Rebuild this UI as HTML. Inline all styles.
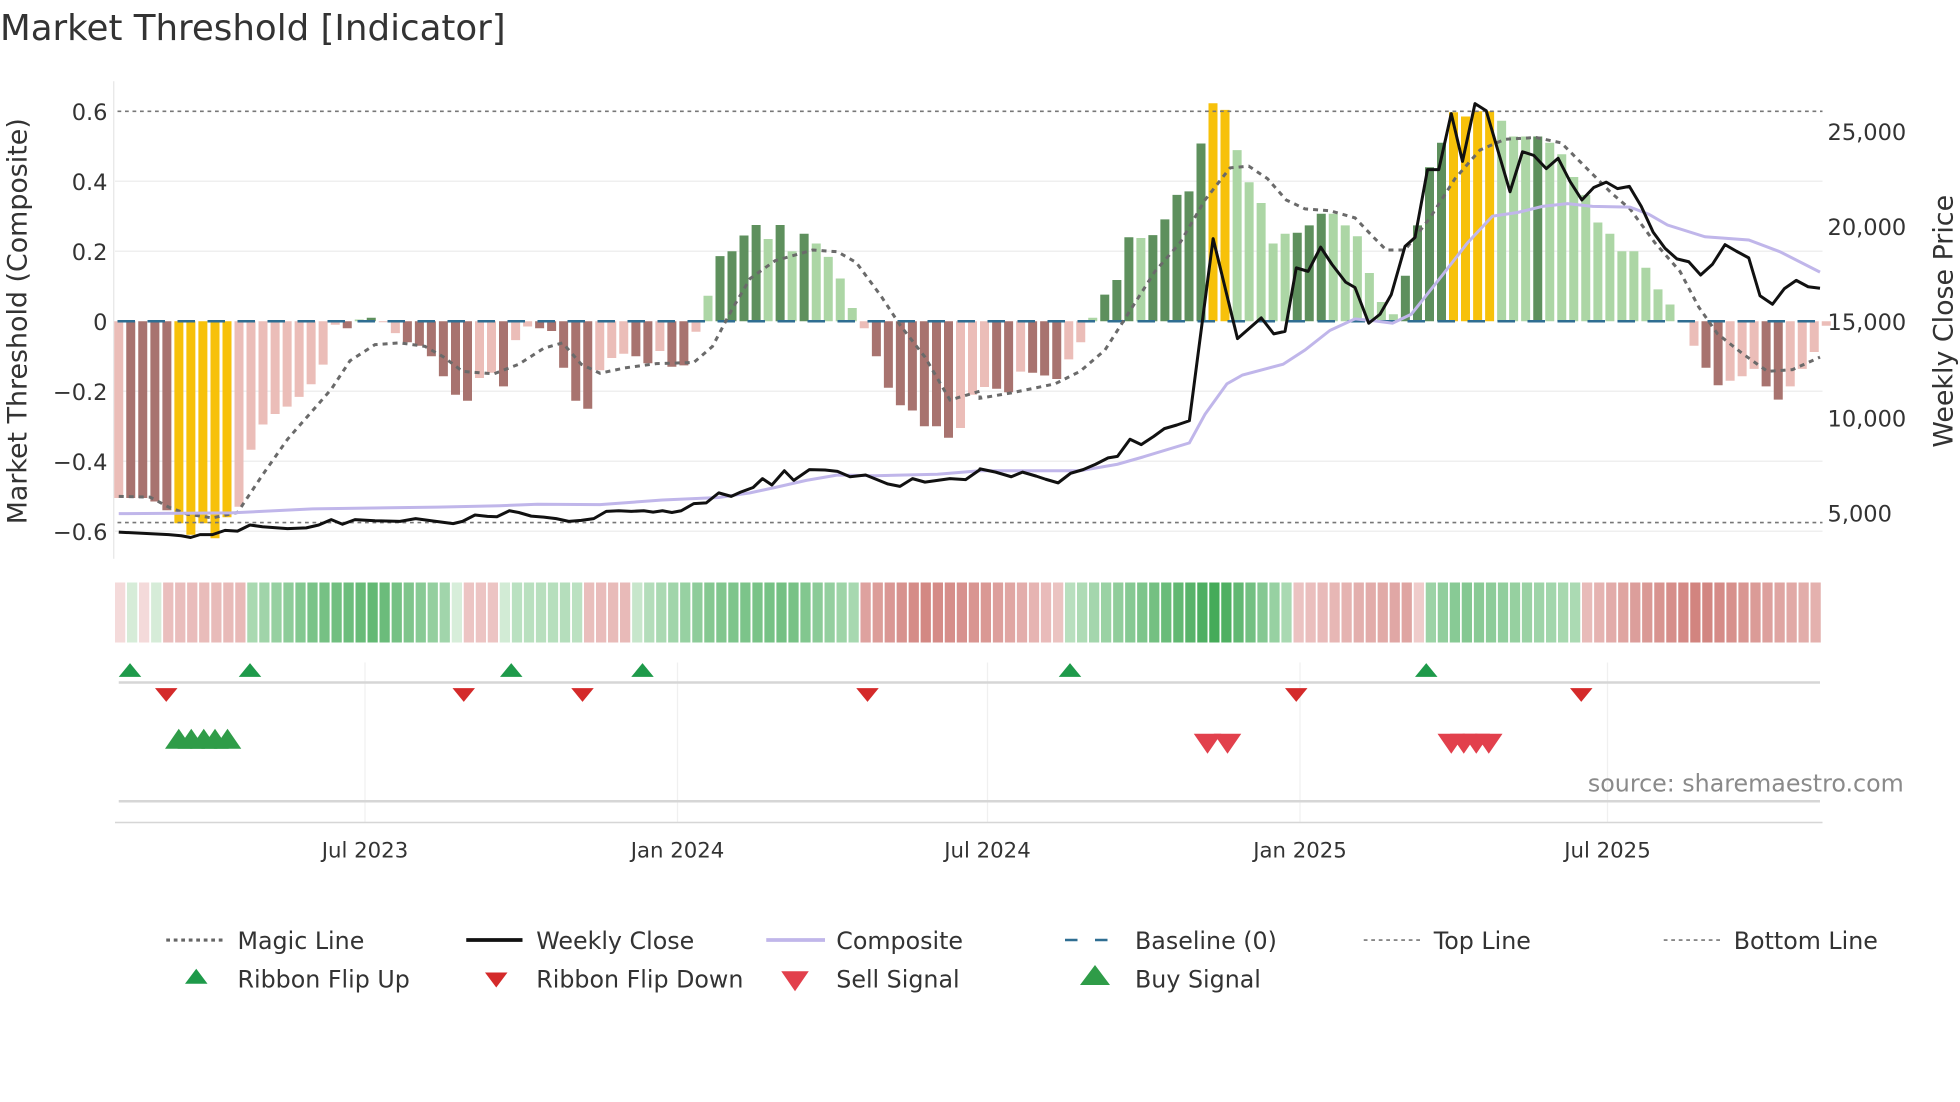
<!DOCTYPE html>
<html><head><meta charset="utf-8">
<style>
html,body{margin:0;padding:0;background:#fff;}
svg{display:block;font-family:"DejaVu Sans","Liberation Sans",sans-serif;}
</style></head>
<body>
<svg id="c" xmlns="http://www.w3.org/2000/svg" width="1960" height="1102" viewBox="0 0 1568 881.6" preserveAspectRatio="none">
<rect width="1568" height="882" fill="#fff"/>
<text x="0" y="32" font-size="28.5" fill="#333">Market Threshold [Indicator]</text>
<line x1="91" y1="65" x2="91" y2="447" stroke="#e6e6e6" stroke-width="1"/>
<g stroke="#efefef" stroke-width="1.2">
<line x1="92" y1="145" x2="1458" y2="145"/><line x1="92" y1="201" x2="1458" y2="201"/>
<line x1="92" y1="313" x2="1458" y2="313"/><line x1="92" y1="369" x2="1458" y2="369"/>
<line x1="92" y1="425" x2="1458" y2="425"/>
</g>
<g font-size="18" fill="#333" text-anchor="end">
<text x="86" y="96">0.6</text><text x="86" y="152">0.4</text><text x="86" y="208">0.2</text>
<text x="86" y="264">0</text><text x="86" y="320">−0.2</text><text x="86" y="376">−0.4</text><text x="86" y="432">−0.6</text>
</g>
<g font-size="18" fill="#333">
<text x="1462" y="112">25,000</text><text x="1462" y="188">20,000</text><text x="1462" y="264">15,000</text>
<text x="1462" y="341">10,000</text><text x="1462" y="417">5,000</text>
</g>
<text transform="translate(21,257) rotate(-90)" font-size="21.5" fill="#333" text-anchor="middle">Market Threshold (Composite)</text>
<text transform="translate(1562,257) rotate(-90)" font-size="21.5" fill="#333" text-anchor="middle">Weekly Close Price</text>
<g id="bars"></g>
<line x1="94" y1="89" x2="1458" y2="89" stroke="#777" stroke-width="1.3" stroke-dasharray="3,3"/>
<line x1="94" y1="418" x2="1458" y2="418" stroke="#777" stroke-width="1.3" stroke-dasharray="3,3"/>
<line x1="94" y1="257" x2="1458" y2="257" stroke="#2f6e92" stroke-width="2" stroke-dasharray="14,10"/>
<g id="lines"></g>
<g id="ribbon"></g>
<g stroke="#f0f0f0" stroke-width="1">
<line x1="292" y1="530" x2="292" y2="658"/><line x1="542" y1="530" x2="542" y2="658"/>
<line x1="790" y1="530" x2="790" y2="658"/><line x1="1040" y1="530" x2="1040" y2="658"/>
<line x1="1286" y1="530" x2="1286" y2="658"/>
</g>
<line x1="95" y1="546" x2="1456" y2="546" stroke="#d6d6d6" stroke-width="2"/>
<line x1="95" y1="641" x2="1456" y2="641" stroke="#d6d6d6" stroke-width="2"/>
<line x1="92" y1="658" x2="1458" y2="658" stroke="#d6d6d6" stroke-width="1.2"/>
<g id="sig"></g>
<text x="1523" y="633" font-size="19" fill="#8a8a8a" text-anchor="end">source: sharemaestro.com</text>
<g font-size="17" fill="#333" text-anchor="middle">
<text x="292" y="686">Jul 2023</text><text x="542" y="686">Jan 2024</text><text x="790" y="686">Jul 2024</text>
<text x="1040" y="686">Jan 2025</text><text x="1286" y="686">Jul 2025</text>
</g>
<g font-size="19" fill="#333">
<line x1="133" y1="752" x2="178" y2="752" stroke="#666" stroke-width="2.5" stroke-dasharray="3,3"/><text x="190" y="759">Magic Line</text>
<line x1="373" y1="752" x2="418" y2="752" stroke="#111" stroke-width="3"/><text x="429" y="759">Weekly Close</text>
<line x1="613" y1="752" x2="660" y2="752" stroke="#c0b6ea" stroke-width="3"/><text x="669" y="759">Composite</text>
<line x1="852" y1="752" x2="897" y2="752" stroke="#2f6e92" stroke-width="2" stroke-dasharray="10,14"/><text x="908" y="759">Baseline (0)</text>
<line x1="1091" y1="752" x2="1136" y2="752" stroke="#777" stroke-width="1.3" stroke-dasharray="3,3"/><text x="1147" y="759">Top Line</text>
<line x1="1331" y1="752" x2="1376" y2="752" stroke="#777" stroke-width="1.3" stroke-dasharray="3,3"/><text x="1387" y="759">Bottom Line</text>
<polygon points="148,787 157,775 166,787" fill="#1e9a4a"/><text x="190" y="790">Ribbon Flip Up</text>
<polygon points="388,778 397,790 406,778" fill="#d42a2a"/><text x="429" y="790">Ribbon Flip Down</text>
<polygon points="625,777 636,793 647,777" fill="#e2404c"/><text x="669" y="790">Sell Signal</text>
<polygon points="864,788 876,772 888,788" fill="#2f9c48"/><text x="908" y="790">Buy Signal</text>
</g>
</svg>
<script>
var NS="http://www.w3.org/2000/svg";
function el(p,t,a){var e=document.createElementNS(NS,t);for(var k in a)e.setAttribute(k,a[k]);p.appendChild(e);return e;}
var B="p-.505 d-.505 d-.505 d-.515 d-.54 y-.577 y-.61 y-.577 y-.62 y-.56 p-.53 p-.367 p-.295 p-.265 p-.244 p-.216 p-.18 p-.124 p-.01 d-.02 g.005 G.01 p-.003 p-.034 d-.06 d-.07 d-.1 d-.157 d-.21 d-.227 p-.162 p-.147 d-.186 p-.054 p-.015 d-.02 d-.028 d-.133 d-.227 d-.25 p-.14 p-.105 p-.093 d-.1 d-.12 p-.085 d-.13 d-.126 p-.03 g.073 G.186 G.2 G.245 G.275 g.235 G.275 g.2 G.25 g.222 g.184 g.122 g.038 p-.02 d-.1 d-.19 d-.24 d-.255 d-.3 d-.3 d-.333 p-.305 p-.21 p-.188 d-.193 d-.203 p-.144 d-.147 d-.155 d-.165 p-.109 p-.06 g.01 G.076 G.118 G.24 g.238 G.246 G.291 G.361 G.371 G.508 y.623 y.604 g.489 g.397 g.338 g.222 g.25 G.253 G.274 G.307 g.307 g.274 g.243 g.138 g.055 g.02 G.13 G.274 G.44 G.51 y.597 y.585 y.6 y.6 g.573 g.528 g.528 G.528 g.51 g.477 g.412 g.361 g.282 g.25 g.2 g.2 g.153 g.091 g.048 p-.003 p-.07 d-.133 d-.183 p-.17 p-.157 p-.136 d-.186 d-.224 p-.186 p-.136 p-.088 p-.013".split(" ");
var col={p:"#ebbdb8",d:"#a8736f",y:"#f7c10a",G:"#5e905d",g:"#acd6a5"};
var bg=document.getElementById("bars");
B.forEach(function(s,i){var c=s[0],v=parseFloat(s.slice(1));var x=95+i*9.62-3.6;var h=Math.abs(v)*280;var y=v>0?257-h:257;
el(bg,"rect",{x:x.toFixed(1),y:y.toFixed(1),width:7.2,height:Math.max(h,0.8).toFixed(1),fill:col[c]});});
function pts(a,b){var r=[];for(var i=0;i<a.length;i+=2)r.push((a[i]/2).toFixed(1)+","+(a[i+1]/3.5).toFixed(1));for(i=0;i<b.length;i+=2)r.push((784+b[i]/2).toFixed(1)+","+(b[i+1]/3.5).toFixed(1));return r.join(" ");}
var lg=document.getElementById("lines");
var m1=[190,1390,240,1392,270,1420,300,1440,340,1450,380,1435,420,1330,460,1230,500,1150,530,1090,560,1010,600,965,640,960,680,970,710,1000,740,1040,790,1047,830,1020,870,975,900,960,930,1020,960,1045,1000,1030,1050,1018,1110,1015,1140,970,1170,870,1200,780,1240,730,1300,700,1340,705,1370,735,1410,830,1440,910,1480,1000,1520,1120,1568,1095],
m2=[0,1115,50,1100,120,1075,160,1040,200,980,240,870,280,760,320,680,360,560,400,470,430,465,460,500,490,560,520,585,560,590,600,610,630,665,650,700,680,700,720,610,760,500,800,420,840,390,890,385,930,400,970,470,1010,540,1040,585,1080,680,1120,760,1150,860,1180,935,1220,990,1260,1040,1300,1035,1344,1000];
var c1=[190,1438,370,1436,500,1425,700,1420,800,1416,860,1412,960,1413,1060,1400,1150,1393,1200,1380,1240,1365,1290,1345,1340,1330,1400,1332,1500,1328,1568,1318],
c2=[0,1318,160,1318,220,1300,260,1280,335,1240,360,1160,395,1075,420,1050,485,1020,520,980,560,925,600,893,630,898,660,905,690,880,740,770,780,680,820,605,860,595,900,578,940,570,980,578,1040,580,1070,600,1100,630,1160,663,1230,672,1280,705,1344,762];
var w1=[190,1490,270,1497,290,1500,305,1505,320,1497,340,1497,360,1485,380,1487,400,1470,420,1475,460,1480,490,1478,510,1470,530,1455,548,1468,568,1455,600,1458,640,1460,665,1452,690,1458,725,1466,740,1460,760,1442,780,1446,795,1447,815,1430,830,1435,850,1445,870,1448,890,1452,910,1460,930,1457,950,1452,970,1432,990,1430,1010,1432,1030,1430,1045,1434,1060,1430,1075,1435,1090,1430,1110,1410,1130,1408,1150,1380,1170,1390,1185,1378,1205,1365,1220,1340,1235,1358,1255,1318,1270,1345,1295,1315,1320,1316,1340,1320,1360,1335,1385,1330,1420,1355,1440,1362,1460,1340,1480,1350,1500,1345,1520,1340,1545,1343,1568,1315],
w2=[0,1313,25,1322,50,1335,68,1322,90,1333,105,1342,125,1352,145,1325,165,1315,185,1300,205,1282,220,1278,240,1230,258,1245,278,1222,295,1200,315,1190,335,1178,373,668,412,948,450,890,470,935,488,928,506,750,525,760,545,692,563,740,585,790,600,805,622,905,640,880,658,825,680,690,696,665,716,475,734,475,754,318,772,452,792,290,810,310,848,537,868,425,886,435,906,472,925,443,944,508,963,560,982,525,1002,510,1020,528,1039,522,1058,578,1077,650,1096,695,1115,725,1134,733,1153,770,1172,740,1192,685,1210,703,1230,722,1248,828,1268,852,1287,808,1306,785,1325,803,1344,807];
el(lg,"polyline",{points:pts(m1,m2),fill:"none",stroke:"#6a6a6a","stroke-width":2.4,"stroke-dasharray":"4,4"});
el(lg,"polyline",{points:pts(c1,c2),fill:"none",stroke:"#c0b6ea","stroke-width":2.4});
el(lg,"polyline",{points:pts(w1,w2),fill:"none",stroke:"#111","stroke-width":2.4,"stroke-linejoin":"round"});
var cp=[[92,.15],[128,.15],[130,-.25],[195,-.3],[200,.3],[250,.6],[300,.75],[340,.5],[364,.3],[368,-.2],[402,-.2],[406,.2],[462,.25],[466,-.25],[507,-.3],[511,.2],[570,.55],[630,.65],[688,.3],[692,-.5],[740,-.75],[790,-.6],[849,-.2],[853,.2],[900,.5],[975,.95],[1031,.3],[1035,-.2],[1090,-.4],[1134,-.5],[1138,.35],[1170,.55],[1262,.3],[1266,-.25],[1300,-.5],[1360,-.8],[1420,-.5],[1460,-.35]];
function val(x){for(var i=0;i<cp.length-1;i++){if(x>=cp[i][0]&&x<=cp[i+1][0]){var t=(x-cp[i][0])/(cp[i+1][0]-cp[i][0]);return cp[i][1]+(cp[i+1][1]-cp[i][1])*t;}}return cp[cp.length-1][1];}
function mix(a,b,t){return "rgb("+[0,1,2].map(function(k){return Math.round(a[k]+(b[k]-a[k])*t)}).join(",")+")";}
var rg=document.getElementById("ribbon");
for(var i=0;i<142;i++){var x=92+i*9.62;var v=val(x+4.8);var c=v>=0?mix([220,240,222],[58,166,80],Math.min(1,v)):mix([245,218,218],[200,108,102],Math.min(1,-v));
if(i<4)c=(i%2==0)?"rgb(244,218,218)":"rgb(214,236,216)";
el(rg,"rect",{x:x.toFixed(1),y:466,width:8.2,height:48,fill:c});}
var sg=document.getElementById("sig");
function up(x,y,w,h,f){el(sg,"polygon",{points:(x-w/2)+","+(y+h/2)+" "+x+","+(y-h/2)+" "+(x+w/2)+","+(y+h/2),fill:f});}
function dn(x,y,w,h,f){el(sg,"polygon",{points:(x-w/2)+","+(y-h/2)+" "+x+","+(y+h/2)+" "+(x+w/2)+","+(y-h/2),fill:f});}
[104,200,409,514,856,1141].forEach(function(x){up(x,536,18,11,"#1e9a4a");});
[133,371,466,694,1037,1265].forEach(function(x){dn(x,556,18,11,"#d42a2a");});
[143,153,163,172,182].forEach(function(x){up(x,591,22,16,"#2f9c48");});
[966,982,1161,1171,1181,1191].forEach(function(x){dn(x,595,22,16,"#e2404c");});
</script>
</body></html>
